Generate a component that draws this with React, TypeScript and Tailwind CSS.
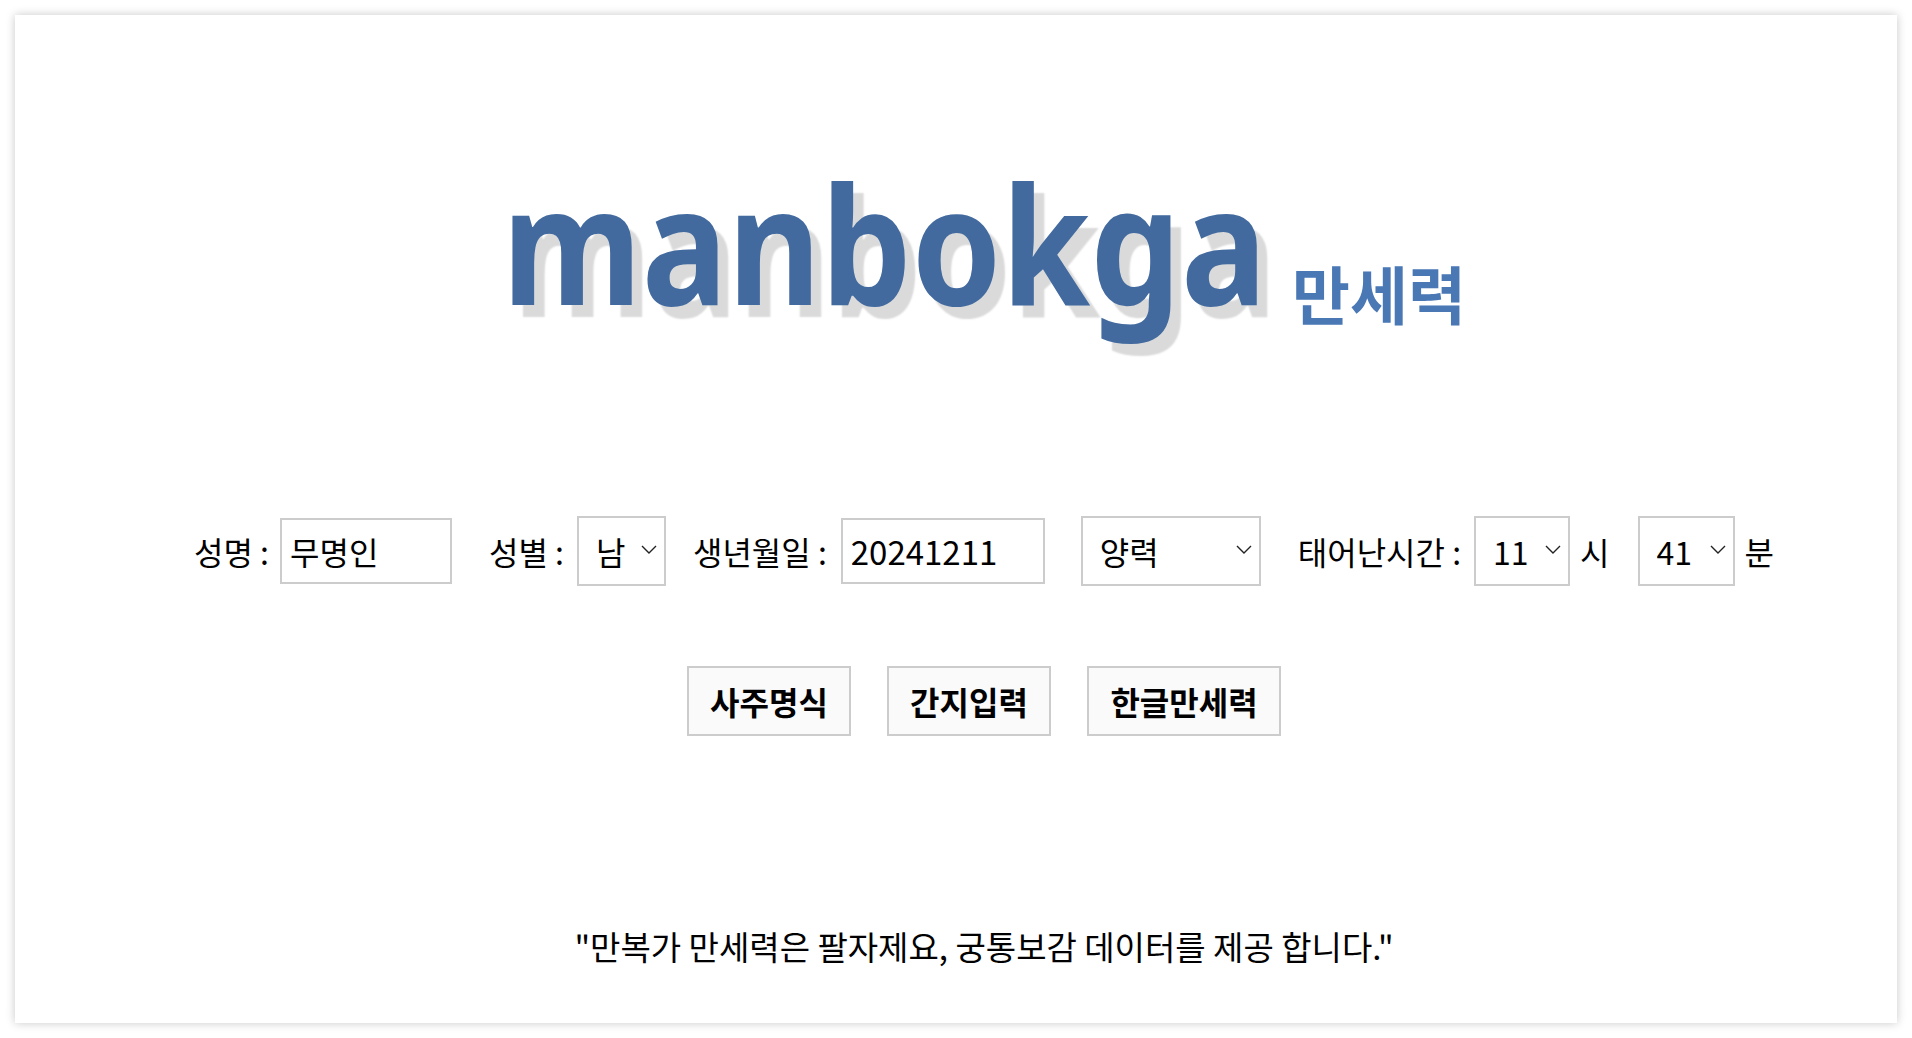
import React, { useState } from 'react';

const krFont = "font-['Noto_Sans_CJK_KR','Noto_Sans',sans-serif]";

const Chevron = () => (
    <svg className="absolute right-[8px] top-[28px] pointer-events-none" width="18" height="11" viewBox="0 0 18 11" fill="none">
        <path d="M2 2l7 7 7-7" stroke="#222" strokeWidth="1.4" />
    </svg>
);

interface PickerProps {
    value: string;
    options: string[];
    width: string;
}

const Picker: React.FC<PickerProps> = ({ value, options, width }) => (
    <div className={`relative shrink-0 ${width}`}>
        <select
            defaultValue={value}
            className="appearance-none w-full h-[70px] pl-[17px] bg-white border-2 border-[#ccc] text-[32px] text-black outline-none"
        >
            {options.map((o) => (
                <option key={o} value={o}>{o}</option>
            ))}
        </select>
        <Chevron />
    </div>
);

const App: React.FC = () => {
    const [name, setName] = useState('무명인');
    const [birth, setBirth] = useState('20241211');

    return (
        <div className={`min-h-[1038px] bg-white p-[15px] ${krFont}`}>
            <div className="h-[1008px] flex flex-col items-center pl-14 bg-white shadow-[0_0_9px_rgba(0,0,0,0.22)]">
                {/* Logo */}
                <div className="flex items-end mt-[122px] h-[210px] w-[952px]">
                    <span className="block w-[776px] shrink-0 -ml-[6px] origin-left scale-x-[0.88] font-['Noto_Sans',sans-serif] font-bold text-[163px] leading-[210px] text-[#426a9f] whitespace-nowrap blur-[0.5px] [text-shadow:12px_12px_2px_#d9dad9]">
                        manbokga
                    </span>
                    <span className="ml-[14px] mb-[20px] text-[63px] leading-[70px] font-semibold text-[#4a78b5] whitespace-nowrap blur-[0.4px]">만세력</span>
                </div>

                {/* Birth form */}
                <div className="flex items-center mt-[169px] h-[70px] text-[32px] text-black">
                    <span className="whitespace-nowrap">성명 :</span>
                    <input
                        value={name}
                        onChange={(e) => setName(e.target.value)}
                        className="w-[172px] h-[66px] ml-[11px] px-[8px] border-2 border-[#ccc] text-[32px] outline-none"
                    />
                    <span className="ml-[37px] whitespace-nowrap">성별 :</span>
                    <Picker value="남" options={['남', '여']} width="w-[89px] ml-[13px]" />
                    <span className="ml-[27px] whitespace-nowrap">생년월일 :</span>
                    <input
                        value={birth}
                        onChange={(e) => setBirth(e.target.value)}
                        className="w-[204px] h-[66px] ml-[14px] px-[8px] border-2 border-[#ccc] text-[33px] outline-none"
                    />
                    <Picker value="양력" options={['양력', '음력']} width="w-[180px] ml-[36px]" />
                    <span className="ml-[37px] whitespace-nowrap">태어난시간 :</span>
                    <Picker value="11" options={['11', '12']} width="w-[96px] ml-[13px]" />
                    <span className="ml-[10px]">시</span>
                    <Picker value="41" options={['41', '42']} width="w-[97px] ml-[28px]" />
                    <span className="ml-[10px]">분</span>
                </div>

                {/* Actions */}
                <div className="flex gap-[36px] mt-[80px]">
                    {[
                        { label: '사주명식', width: 'w-[164px]' },
                        { label: '간지입력', width: 'w-[164px]' },
                        { label: '한글만세력', width: 'w-[194px]' },
                    ].map((b) => (
                        <button
                            key={b.label}
                            type="button"
                            className={`h-[70px] ${b.width} bg-[#fafafa] border-2 border-[#ccc] text-[32px] font-bold text-black`}
                        >
                            {b.label}
                        </button>
                    ))}
                </div>

                <p className="mt-[188px] text-[33px] leading-[44px] text-black whitespace-nowrap">
                    "만복가 만세력은 팔자제요, 궁통보감 데이터를 제공 합니다."
                </p>
            </div>
        </div>
    );
};

export default App;
